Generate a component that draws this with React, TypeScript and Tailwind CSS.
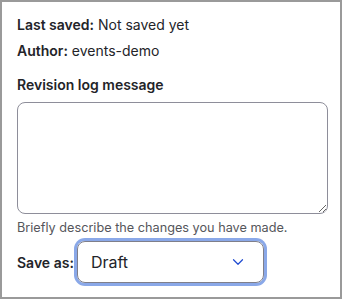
import { ChevronDown } from "lucide-react";

export default function App() {
  return (
    <div className="h-[299px] w-[342px] border-2 border-[#9a9a9a] bg-white font-['Inter',sans-serif] text-[#232429]">
      <div className="px-[15px] pt-[10px]">
        <div className="text-[14px] leading-[26px]">
          <p>
            <span className="font-semibold">Last saved:</span> Not saved yet
          </p>
          <p>
            <span className="font-semibold">Author:</span> events-demo
          </p>
        </div>

        <label className="mt-[11px] block text-[14px] font-semibold leading-[20px]">
          Revision log message
        </label>
        <textarea
          className="mt-[7px] block h-[112px] w-[311px] rounded-[8px] border border-[#8e8e9a] bg-white"
          aria-label="Revision log message"
        />
        <p className="mt-[6px] text-[12.7px] leading-[16px] text-[#55565b]">
          Briefly describe the changes you have made.
        </p>

        <div className="mt-[5px] flex items-center gap-[3px]">
          <span className="text-[14px] font-semibold">Save as:</span>
          <div className="flex h-[42px] w-[187px] items-center justify-between rounded-[8px] border border-[#7f7f8a] pl-[13px] pr-[16px] ring-[3px] ring-[#8aa8e8]">
            <span className="text-[16px]">Draft</span>
            <ChevronDown className="h-[18px] w-[18px] text-[#1f4bd1]" strokeWidth={1.6} />
          </div>
        </div>
      </div>
    </div>
  );
}
